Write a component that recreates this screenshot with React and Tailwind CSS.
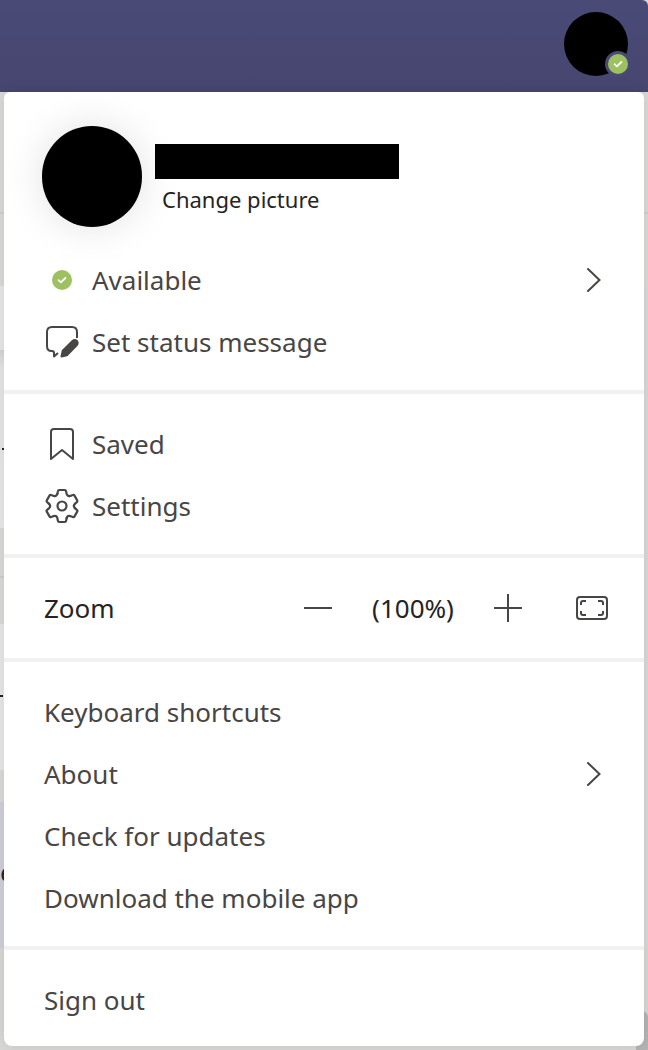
import { useState } from "react";

const StatusBadge = () => (
  <svg viewBox="0 0 20 20" className="block h-5 w-5" fill="none" aria-hidden="true">
    <circle cx="10" cy="10" r="10" fill="#9dc160" />
    <path d="M6.6 10.2l2.3 2.2 4.5-4.4" stroke="#fff" strokeWidth="1.8" strokeLinecap="round" strokeLinejoin="round" />
  </svg>
);

const MessageIcon = () => (
  <svg viewBox="0 0 36 36" className="h-9 w-9" fill="none" stroke="currentColor" strokeWidth="2" aria-hidden="true">
    <path d="M33 14V8q0-5-5-5H8Q3 3 3 8v14q0 5 4.500 5H8q2 0 2 2v3.500l4-3.500" strokeLinejoin="round" />
    <path d="M17.500 32.500l1.200-5.700L28.500 17q2-1.800 4.200-.4 1.800 2.200.2 4.400L22.900 31.200z" fill="currentColor" strokeLinejoin="round" />
  </svg>
);

const BookmarkIcon = () => (
  <svg viewBox="0 0 36 36" className="h-9 w-9" fill="none" stroke="currentColor" strokeWidth="2" strokeLinejoin="round" aria-hidden="true">
    <path d="M7 33V6q0-3 3-3h16q3 0 3 3v27L18 24z" />
  </svg>
);

const SettingsIcon = () => (
  <svg viewBox="-18 -18 36 36" className="h-9 w-9" fill="none" stroke="currentColor" strokeWidth="2.2" strokeLinecap="round" aria-hidden="true">
    <circle r="4.500" />
    {[0, 60, 120, 180, 240, 300].map((angle) => (
      <path
        key={angle}
        transform={`rotate(${angle})`}
        d="M-4.600-12.200L-4.100-14.800Q-3.900-16-2.700-16H2.700Q3.900-16 4.100-14.800L4.600-12.200Q5.400-9.350 8.270-10.080"
      />
    ))}
  </svg>
);

const ChevronIcon = () => (
  <svg viewBox="0 0 16 26" className="h-[26px] w-4" fill="none" stroke="currentColor" strokeWidth="2" strokeLinecap="round" aria-hidden="true">
    <path d="M2 2l11.500 11L2 24" />
  </svg>
);

const FullscreenIcon = () => (
  <svg viewBox="0 0 32 24" className="h-6 w-8" fill="none" stroke="currentColor" strokeWidth="2" aria-hidden="true">
    <rect x="1" y="1" width="30" height="22" rx="3" />
    <path d="M5 9V7q0-2 2-2h3M22 5h3q2 0 2 2v2M27 15v2q0 2-2 2h-3M10 19H7q-2 0-2-2v-2" />
  </svg>
);

const MenuItem = ({ icon, label, hasSubmenu }) => (
  <button
    type="button"
    className="flex h-[62px] w-full items-center pl-10 pr-[42px] text-left hover:bg-gray-50"
  >
    {icon && <span className="mr-3 flex w-9 shrink-0 justify-center">{icon}</span>}
    <span className="flex-1">{label}</span>
    {hasSubmenu && <ChevronIcon />}
  </button>
);

const Section = ({ children }) => (
  <div className="border-b-4 border-[#f1f1f1] pb-[17px] pt-[19px]">{children}</div>
);

// What shows of the app around the open menu
const Backdrop = () => (
  <div className="absolute inset-0 flex flex-col overflow-hidden bg-[#d9d9d9]" aria-hidden="true">
    <div className="h-[122px] shrink-0 border-b-2 border-[#cfcecd] bg-[#dbdad8]" />
    <div className="h-[72px] shrink-0 bg-[#dbdad8]" />
    <div className="h-16 w-1/2 shrink-0 bg-[#e8e8e8]" />
    <div className="h-[178px] w-1/2 shrink-0 bg-linear-to-b from-[#d4d4d4] via-[#e6e6e6] via-10% to-[#e9e9e9] pt-[98px]">
      <div className="ml-0.5 h-0.5 w-1 bg-[#252423]" />
    </div>
    <div className="h-[50px] w-1/2 shrink-0 border-b-2 border-[#cfcecd] bg-[#dbdad8]" />
    <div className="h-[46px] w-1/2 shrink-0 bg-[#dbdad8]" />
    <div className="h-[146px] w-1/2 shrink-0 bg-[#e8e8e8] pt-[71px]">
      <div className="h-0.5 w-[3px] bg-[#252423]" />
    </div>
    <div className="h-8 w-1/2 shrink-0 bg-[#dbdad8]" />
    <div className="h-[146px] w-1/2 shrink-0 bg-[#d0d0dd] pt-[52px] text-[26px] leading-9 text-[#252423]">e</div>
    <div className="flex flex-1 items-end justify-end bg-[#d8d8d7]">
      <div className="h-[39px] w-3 rounded-tr-md bg-[#b4b4b4]" />
    </div>
  </div>
);

export default function App() {
  const [zoom, setZoom] = useState(100);

  return (
    <div className="min-h-screen bg-[#d5d5d5] font-['Noto_Sans','Open_Sans',sans-serif]">
      <header className="flex h-[92px] items-start justify-end rounded-tr-md bg-linear-to-b from-[#494a75] to-[#464671] px-5 pt-3">
        <button type="button" aria-label="Profile" className="relative h-16 w-16 rounded-full bg-black">
          <span className="absolute -right-[3px] -bottom-px rounded-full bg-[#484974] p-[3px]">
            <StatusBadge />
          </span>
        </button>
      </header>

      <main className="relative px-1 pb-1">
        <Backdrop />
        <div className="relative overflow-hidden rounded-b-lg rounded-t-md bg-white text-[26px] leading-9 text-[#484644] shadow-[0_0_14px_rgba(0,0,0,0.1)]">
          <div className="border-b-4 border-[#f1f1f1] pb-[17px]">
            <div className="flex h-[157px] items-start pl-[38px] pt-[34px]">
              <div className="h-[101px] w-[100px] shrink-0 rounded-full bg-black shadow-[0_0_40px_rgba(0,0,0,0.12)]" />
              <div className="ml-[13px] pt-[18px]">
                <div className="h-[35px] w-[244px] bg-black" />
                <button type="button" className="ml-[7px] mt-1 block text-[22px] leading-8 text-[#252423]">
                  Change picture
                </button>
              </div>
            </div>
            <MenuItem icon={<StatusBadge />} label="Available" hasSubmenu />
            <MenuItem icon={<MessageIcon />} label="Set status message" />
          </div>

          <Section>
            <MenuItem icon={<BookmarkIcon />} label="Saved" />
            <MenuItem icon={<SettingsIcon />} label="Settings" />
          </Section>

          <div className="flex h-[104px] items-center border-b-4 border-[#f1f1f1] pl-10 pr-9 text-[#252423]">
            <span className="flex-1">Zoom</span>
            <button type="button" aria-label="Zoom out" className="text-[#484644]" onClick={() => setZoom(zoom - 10)}>
              <svg viewBox="0 0 28 28" className="block h-7 w-7" stroke="currentColor" strokeWidth="2" aria-hidden="true">
                <path d="M0 14h28" />
              </svg>
            </button>
            <span className="w-[162px] text-center">({zoom}%)</span>
            <button type="button" aria-label="Zoom in" className="text-[#484644]" onClick={() => setZoom(zoom + 10)}>
              <svg viewBox="0 0 28 28" className="block h-7 w-7" stroke="currentColor" strokeWidth="2" aria-hidden="true">
                <path d="M0 14h28M14 0v28" />
              </svg>
            </button>
            <button type="button" aria-label="Full screen" className="ml-[54px] text-[#484644]">
              <FullscreenIcon />
            </button>
          </div>

          <Section>
            <MenuItem label="Keyboard shortcuts" />
            <MenuItem label="About" hasSubmenu />
            <MenuItem label="Check for updates" />
            <MenuItem label="Download the mobile app" />
          </Section>

          <div className="pb-[15px] pt-[19px]">
            <MenuItem label="Sign out" />
          </div>
        </div>
      </main>
    </div>
  );
}
